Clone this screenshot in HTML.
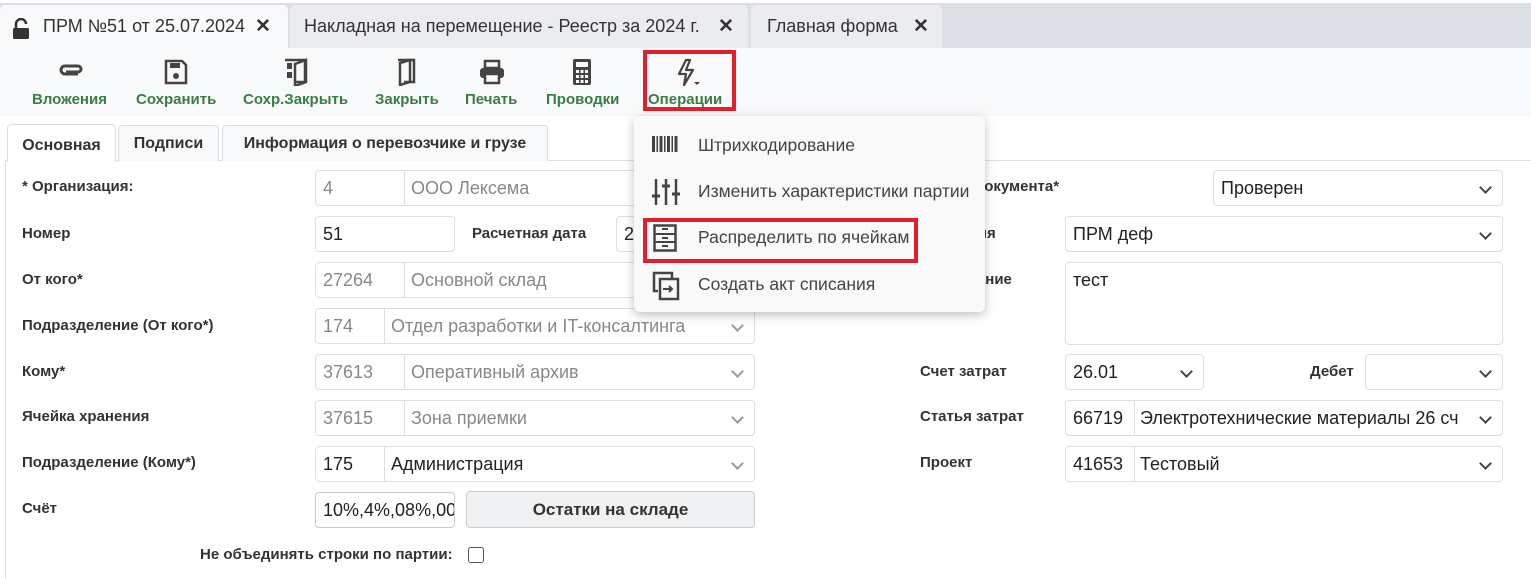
<!DOCTYPE html>
<html><head><meta charset="utf-8"><style>
*{box-sizing:border-box;margin:0;padding:0}
body{width:1531px;height:579px;overflow:hidden;background:#fff;font-family:"Liberation Sans",sans-serif;position:relative;color:#333}
.a{position:absolute;white-space:nowrap}
.tabbar{position:absolute;left:0;top:3px;width:1531px;height:45px;background:#dcdfe3}
.tab{position:absolute;top:5px;height:43px;border-radius:5px 5px 0 0;font-size:18px;color:#333;line-height:43px;padding-left:14px;white-space:nowrap}
.x{position:absolute;top:0;font-size:19px;font-weight:bold;color:#333}
.toolbar{position:absolute;left:0;top:48px;width:1531px;height:68px;background:#f8f9fa}
.tb{position:absolute;top:91px;font-size:15px;font-weight:bold;color:#3a7d44;white-space:nowrap}
.lbl{position:absolute;font-size:15px;font-weight:bold;color:#333;white-space:nowrap}
.f{position:absolute;height:36px;border:1px solid #dcdfe3;border-radius:4px;background:#fff;font-size:18px;line-height:35px;padding-left:7px;color:#222;overflow:hidden;white-space:nowrap}
.g{color:#888}
.sep{position:absolute;top:0;bottom:0;border-left:1px solid #dcdfe3}
.chev{position:absolute;right:12px;top:12px;width:9px;height:9px;border-right:2.5px solid #444;border-bottom:2.5px solid #444;transform:rotate(45deg)}
.chev.g2{border-color:#999}
.ctab{position:absolute;top:125px;height:36px;border:1px solid #dcdfe3;border-bottom:none;border-radius:4px 4px 0 0;background:#f8f9fa;font-size:16px;font-weight:bold;line-height:36px;text-align:center;color:#333;white-space:nowrap}
.menu{position:absolute;left:634px;top:116px;width:351px;height:196px;background:#f9f9f9;border-radius:6px;box-shadow:0 3px 10px rgba(0,0,0,.25)}
.mi{position:absolute;left:64px;font-size:17.5px;color:#444;white-space:nowrap}
</style></head><body>
<div class="tabbar"></div>
<div class="tab" style="left:0;width:288px;background:#f8f9fa;padding-left:43px">ПРМ №51 от 25.07.2024<span class="x" style="left:255px">✕</span></div>
<svg class="a" style="left:12px;top:18px" width="18" height="22" viewBox="0 0 18 22"><path d="M4 10V6a5 5 0 0 1 10 0" fill="none" stroke="#333" stroke-width="2.5"/><rect x="1" y="10" width="16" height="11" rx="1.5" fill="#333"/></svg>
<div class="tab" style="left:290px;width:458px;background:#eaecef">Накладная на перемещение - Реестр за 2024 г.<span class="x" style="left:428px">✕</span></div>
<div class="tab" style="left:751px;width:191px;background:#eaecef;padding-left:16px">Главная форма<span class="x" style="left:162px">✕</span></div>

<div class="toolbar"></div>
<svg class="a" style="left:58px;top:62px" width="26" height="18" viewBox="0 0 26 18"><path d="M20 12H7a4 4 0 0 1 0-8h13a3 3 0 0 1 0 6H8" fill="none" stroke="#444" stroke-width="3"/></svg>
<svg class="a" style="left:164px;top:59px" width="24" height="26" viewBox="0 0 24 26"><path d="M2 2h16l4 4v18H2z" fill="none" stroke="#444" stroke-width="2.5"/><rect x="6" y="4" width="10" height="5" fill="#444"/><circle cx="12" cy="17" r="3" fill="#444"/></svg>
<svg class="a" style="left:283px;top:58px" width="26" height="28" viewBox="0 0 26 28"><path d="M2 2h20v22H12" fill="none" stroke="#444" stroke-width="2.5"/><path d="M12 6l11-4v22l-11 4z" fill="none" stroke="#444" stroke-width="2.5"/><rect x="4" y="5" width="5" height="6" fill="#444"/><rect x="4" y="14" width="5" height="6" fill="#444"/></svg>
<svg class="a" style="left:396px;top:58px" width="22" height="28" viewBox="0 0 22 28"><path d="M2 2h16v22H8" fill="none" stroke="#444" stroke-width="2.5"/><path d="M4 5l10-3v22l-10 3z" fill="none" stroke="#444" stroke-width="2.5"/></svg>
<svg class="a" style="left:478px;top:59px" width="28" height="26" viewBox="0 0 28 26"><rect x="7" y="2" width="14" height="7" fill="none" stroke="#444" stroke-width="2.5"/><rect x="2" y="9" width="24" height="10" rx="3" fill="#444"/><rect x="7" y="15" width="14" height="9" fill="#f8f9fa" stroke="#444" stroke-width="2.5"/></svg>
<svg class="a" style="left:572px;top:58px" width="20" height="28" viewBox="0 0 20 28"><rect x="1" y="1" width="18" height="26" rx="2" fill="#444"/><rect x="4" y="4" width="12" height="5" fill="#f8f9fa"/><g fill="#f8f9fa"><rect x="4" y="12" width="3" height="3"/><rect x="8.5" y="12" width="3" height="3"/><rect x="13" y="12" width="3" height="3"/><rect x="4" y="17" width="3" height="3"/><rect x="8.5" y="17" width="3" height="3"/><rect x="13" y="17" width="3" height="3"/><rect x="4" y="22" width="3" height="3"/><rect x="8.5" y="22" width="3" height="3"/><rect x="13" y="22" width="3" height="3"/></g></svg>
<svg class="a" style="left:676px;top:58px" width="26" height="30" viewBox="0 0 26 30"><path d="M10 2L3 16h7l-2 11 9-15h-7l4-10z" fill="none" stroke="#444" stroke-width="2.2" stroke-linejoin="round"/><path d="M18 24h6l-3 3z" fill="#444"/></svg>
<div class="tb" style="left:32px">Вложения</div>
<div class="tb" style="left:136px">Сохранить</div>
<div class="tb" style="left:243px">Сохр.Закрыть</div>
<div class="tb" style="left:375px">Закрыть</div>
<div class="tb" style="left:465px">Печать</div>
<div class="tb" style="left:546px">Проводки</div>
<div class="tb" style="left:648px">Операции</div>
<div class="a" style="left:643px;top:50px;width:93px;height:61px;border:4px solid #e0212b"></div>

<div class="a" style="left:5px;top:160px;width:1526px;border-top:1px solid #dcdfe3"></div>
<div class="a" style="left:5px;top:160px;height:419px;border-left:1px solid #dcdfe3"></div>
<div class="ctab" style="left:7px;width:109px;background:#fff;height:38px;top:124px;line-height:42px">Основная</div>
<div class="ctab" style="left:118px;width:101px">Подписи</div>
<div class="ctab" style="left:222px;width:326px">Информация о перевозчике и грузе</div>

<div class="lbl" style="left:22px;top:178px">* Организация:</div>
<div class="f g" style="left:315px;top:170px;width:440px">4<div class="sep" style="left:88px"></div><span class="a" style="left:95px">ООО Лексема</span></div>
<div class="lbl" style="left:22px;top:225px">Номер</div>
<div class="f" style="left:315px;top:216px;width:140px">51</div>
<div class="lbl" style="left:472px;top:225px">Расчетная дата</div>
<div class="f" style="left:616px;top:216px;width:140px">25.07.2024</div>
<div class="lbl" style="left:22px;top:271px">От кого*</div>
<div class="f g" style="left:315px;top:262px;width:440px">27264<div class="sep" style="left:88px"></div><span class="a" style="left:95px">Основной склад</span></div>
<div class="lbl" style="left:22px;top:317px">Подразделение (От кого*)</div>
<div class="f g" style="left:315px;top:308px;width:440px">174<div class="sep" style="left:68px"></div><span class="a" style="left:75px">Отдел разработки и IT-консалтинга</span><div class="chev g2"></div></div>
<div class="lbl" style="left:22px;top:363px">Кому*</div>
<div class="f g" style="left:315px;top:354px;width:440px">37613<div class="sep" style="left:88px"></div><span class="a" style="left:95px">Оперативный архив</span><div class="chev g2"></div></div>
<div class="lbl" style="left:22px;top:408px">Ячейка хранения</div>
<div class="f g" style="left:315px;top:400px;width:440px">37615<div class="sep" style="left:88px"></div><span class="a" style="left:95px">Зона приемки</span><div class="chev g2"></div></div>
<div class="lbl" style="left:22px;top:454px">Подразделение (Кому*)</div>
<div class="f" style="left:315px;top:446px;width:440px">175<div class="sep" style="left:68px"></div><span class="a" style="left:75px">Администрация</span><div class="chev g2"></div></div>
<div class="lbl" style="left:22px;top:500px">Счёт</div>
<div class="f" style="left:315px;top:492px;width:140px;border-color:#ccc">10%,4%,08%,00</div>
<div class="a" style="left:466px;top:491px;width:289px;height:37px;border:1px solid #ccc;border-radius:4px;background:#f0f1f2;font-size:17px;font-weight:bold;text-align:center;line-height:35px;color:#333">Остатки на складе</div>
<div class="lbl" style="left:200px;top:546px">Не объединять строки по партии:</div>
<div class="a" style="left:468px;top:547px;width:16px;height:16px;border:1.5px solid #555;border-radius:3px"></div>

<div class="lbl" style="left:920px;top:178px">Статус документа*</div>
<div class="f" style="left:1213px;top:170px;width:290px">Проверен<div class="chev"></div></div>
<div class="lbl" style="left:920px;top:225px">Категория</div>
<div class="f" style="left:1065px;top:216px;width:438px">ПРМ деф<div class="chev"></div></div>
<div class="lbl" style="left:920px;top:271px">Примечание</div>
<div class="f" style="left:1065px;top:262px;width:438px;height:83px">тест</div>
<div class="lbl" style="left:920px;top:363px">Счет затрат</div>
<div class="f" style="left:1065px;top:354px;width:139px">26.01<div class="chev"></div></div>
<div class="lbl" style="left:1310px;top:363px">Дебет</div>
<div class="f" style="left:1365px;top:354px;width:138px"><div class="chev"></div></div>
<div class="lbl" style="left:920px;top:408px">Статья затрат</div>
<div class="f" style="left:1065px;top:400px;width:438px">66719<div class="sep" style="left:68px"></div><span class="a" style="left:74px;width:326px;overflow:hidden">Электротехнические материалы 26 сч</span><div class="chev"></div></div>
<div class="lbl" style="left:920px;top:454px">Проект</div>
<div class="f" style="left:1065px;top:446px;width:438px">41653<div class="sep" style="left:68px"></div><span class="a" style="left:74px">Тестовый</span><div class="chev"></div></div>

<div class="menu">
<svg class="a" style="left:18px;top:20px" width="28" height="16" viewBox="0 0 28 16" fill="#444"><rect x="0" y="0" width="3" height="16"/><rect x="4.5" y="0" width="1.5" height="16"/><rect x="7.5" y="0" width="3" height="16"/><rect x="12" y="0" width="1.5" height="16"/><rect x="15" y="0" width="3" height="16"/><rect x="19.5" y="0" width="1.5" height="16"/><rect x="22.5" y="0" width="3" height="16"/></svg>
<div class="mi" style="top:19px">Штрихкодирование</div>
<svg class="a" style="left:18px;top:62px" width="28" height="28" viewBox="0 0 28 28" stroke="#444" stroke-width="2.5"><path d="M4 1v26M14 1v26M24 1v26"/><path d="M0 18h8M10 8h8M20 16h8" stroke-width="3"/></svg>
<div class="mi" style="top:65px">Изменить характеристики партии</div>
<svg class="a" style="left:19px;top:108px" width="24" height="28" viewBox="0 0 24 28" fill="none" stroke="#444" stroke-width="2.5"><rect x="1.5" y="1.5" width="21" height="25"/><path d="M1.5 10h21M1.5 18h21M9 5h6M9 14h6M9 22h6" stroke-width="2"/></svg>
<div class="mi" style="top:111px">Распределить по ячейкам</div>
<svg class="a" style="left:18px;top:155px" width="28" height="30" viewBox="0 0 28 30" fill="none" stroke="#444" stroke-width="2.5"><path d="M6 20H2V2h18v5"/><path d="M8 8h18v20H8z"/><path d="M11 18h9M17 15l3 3-3 3" stroke-width="2"/></svg>
<div class="mi" style="top:158px">Создать акт списания</div>
</div>
<div class="a" style="left:643px;top:218px;width:275px;height:45px;border:4px solid #e0212b"></div>
</body></html>
